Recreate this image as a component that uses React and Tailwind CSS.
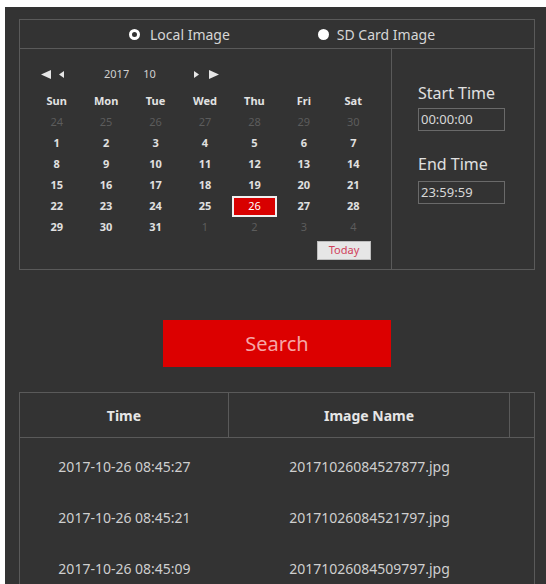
import React from "react";

const font = { fontFamily: '"Noto Sans", "Open Sans", sans-serif' };

const weeks = [
  [["24", 1], ["25", 1], ["26", 1], ["27", 1], ["28", 1], ["29", 1], ["30", 1]],
  [["1"], ["2"], ["3"], ["4"], ["5"], ["6"], ["7"]],
  [["8"], ["9"], ["10"], ["11"], ["12"], ["13"], ["14"]],
  [["15"], ["16"], ["17"], ["18"], ["19"], ["20"], ["21"]],
  [["22"], ["23"], ["24"], ["25"], ["26", 0, 1], ["27"], ["28"]],
  [["29"], ["30"], ["31"], ["1", 1], ["2", 1], ["3", 1], ["4", 1]],
];

const rows = [
  ["2017-10-26 08:45:27", "20171026084527877.jpg"],
  ["2017-10-26 08:45:21", "20171026084521797.jpg"],
  ["2017-10-26 08:45:09", "20171026084509797.jpg"],
];

function Tri({ dir, w, h }) {
  const pts = dir === "l" ? `${w},0 ${w},${h} 0,${h / 2}` : `0,0 0,${h} ${w},${h / 2}`;
  return (
    <svg width={w} height={h} viewBox={`0 0 ${w} ${h}`} className="block">
      <polygon points={pts} fill="#e6e6e6" />
    </svg>
  );
}

export default function App() {
  return (
    <div className="w-[546px] h-[584px] bg-white pt-[7px] pl-[5px] overflow-hidden" style={font}>
      <div className="h-full bg-[#333333] pt-[12px] pl-[14px] pr-[11px] text-[#d9d9d9]">
        {/* source selector + calendar + time range */}
        <div className="border border-[#5a5a5a] h-[251px] flex flex-col">
          <div className="h-[29px] border-b border-[#5a5a5a] flex items-center text-[14px] text-[#d6d6d6]">
            <div className="flex items-center ml-[109px]">
              <span className="w-[11px] h-[11px] rounded-full border-[3px] border-white bg-[#333] mr-[10px]" />
              <span>Local Image</span>
            </div>
            <div className="flex items-center ml-[88px]">
              <span className="w-[11px] h-[11px] rounded-full bg-white mr-[8px]" />
              <span>SD Card Image</span>
            </div>
          </div>
          <div className="flex flex-1">
            <div className="w-[372px] border-r border-[#5a5a5a] pt-[15px] pl-[12px]">
              <div className="h-[20px] flex items-center pl-[9px] text-[11px] text-[#d0d0d0]">
                <Tri dir="l" w={10} h={9} />
                <span className="ml-[8px]"><Tri dir="l" w={5} h={7} /></span>
                <span className="ml-[40px]">2017</span>
                <span className="ml-[14px]">10</span>
                <span className="ml-[38px]"><Tri dir="r" w={5} h={7} /></span>
                <span className="ml-[10px]"><Tri dir="r" w={10} h={9} /></span>
              </div>
              <div className="w-[346px] mt-[7px] grid grid-cols-7 text-[11px] font-bold">
                {["Sun", "Mon", "Tue", "Wed", "Thu", "Fri", "Sat"].map((d) => (
                  <div key={d} className="h-[21px] flex items-center justify-center text-[#e2e2e2]">{d}</div>
                ))}
                {weeks.flat().map(([n, dim, sel], i) => (
                  <div key={i} className="h-[21px] flex items-center justify-center">
                    {sel ? (
                      <span className="w-[45px] h-[21px] bg-[#d80000] border-2 border-[#f0f0f0] flex items-center justify-center text-white font-normal">
                        {n}
                      </span>
                    ) : (
                      <span className={dim ? "text-[#5c5c5c] font-normal" : "text-[#e0e0e0]"}>{n}</span>
                    )}
                  </div>
                ))}
              </div>
              <div className="w-[346px] flex justify-end pr-[7px] mt-[3px]">
                <button className="w-[54px] h-[19px] bg-[#e6e6e6] border border-[#bdbdbd] text-[11px] text-[#d0405a] flex items-center justify-center">
                  Today
                </button>
              </div>
            </div>
            <div className="flex-1 pl-[26px] pt-[33px]">
              <div className="text-[16px] leading-[22px] text-[#e0e0e0]">Start Time</div>
              <div className="mt-[4px] w-[87px] h-[23px] border border-[#6a6a6a] text-[13px] leading-[21px] pl-[2px] text-[#d8d8d8]">00:00:00</div>
              <div className="mt-[22px] text-[16px] leading-[22px] text-[#e0e0e0]">End Time</div>
              <div className="mt-[6px] w-[87px] h-[23px] border border-[#6a6a6a] text-[13px] leading-[21px] pl-[2px] text-[#d8d8d8]">23:59:59</div>
            </div>
          </div>
        </div>

        <div className="mt-[50px] flex justify-center">
          <button className="w-[228px] h-[47px] bg-[#dc0000] text-[20px] text-[#f6a6a6]">Search</button>
        </div>

        {/* results table */}
        <div className="mt-[25px] border-t border-l border-r border-[#5a5a5a] h-[200px]">
          <div className="h-[45px] flex border-b border-[#5a5a5a] text-[14px] font-bold text-[#e6e6e6]">
            <div className="w-[209px] border-r border-[#5a5a5a] flex items-center justify-center">Time</div>
            <div className="w-[281px] border-r border-[#5a5a5a] flex items-center justify-center">Image Name</div>
            <div className="flex-1" />
          </div>
          <div className="pt-[3px] text-[14px] text-[#cfcfcf]">
            {rows.map(([t, n]) => (
              <div key={n} className="h-[51px] flex items-center">
                <div className="w-[209px] text-center">{t}</div>
                <div className="w-[281px] text-center">{n}</div>
              </div>
            ))}
          </div>
        </div>
      </div>
    </div>
  );
}
